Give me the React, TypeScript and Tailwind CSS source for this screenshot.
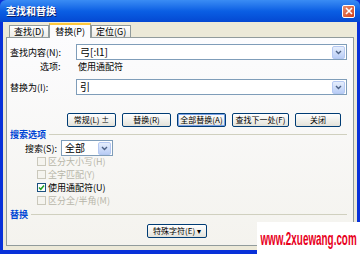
import React from "react";

const F = { fontFamily: '"Noto Sans CJK SC", "Liberation Sans", sans-serif' };

function Arrow() {
  return (
    <div className="w-[13px] h-[13px] mr-[1px] rounded-[2px] bg-gradient-to-b from-[#E6EEFC] to-[#B9CDF6] border border-[#B5C8F2] flex items-center justify-center">
      <svg width="7" height="5" viewBox="0 0 7 5">
        <path d="M1 1 L3.5 3.5 L6 1" stroke="#4D6185" strokeWidth="1.4" fill="none" />
      </svg>
    </div>
  );
}

function Combo({ text, w }: { text: string; w?: string }) {
  return (
    <div className={`h-[16px] bg-white border border-[#7F9DB9] flex items-center justify-between ${w ?? "flex-1"}`}>
      <span className="pl-[3px] text-[10px] leading-none text-black whitespace-nowrap">{text}</span>
      <Arrow />
    </div>
  );
}

function Btn({ children, w, cls }: { children: React.ReactNode; w: string; cls?: string }) {
  return (
    <div
      className={`h-[14px] ${w} rounded-[2px] border border-[#003C74] bg-gradient-to-b from-[#FFFFFF] to-[#E3E2DA] flex items-center justify-center text-[8px] leading-none text-black whitespace-nowrap overflow-hidden ${cls ?? ""}`}
    >
      {children}
    </div>
  );
}

function Check({ label, checked, disabled }: { label: string; checked?: boolean; disabled?: boolean }) {
  return (
    <div className="h-[13px] flex items-center pl-[27px] gap-[2px]">
      <div
        className={`w-[9px] h-[9px] border ${disabled ? "border-[#CAC8BB] bg-[#F5F4EF]" : "border-[#1C5180] bg-white"} flex items-center justify-center`}
      >
        {checked && (
          <svg width="7" height="7" viewBox="0 0 7 7">
            <path d="M1 3.5 L2.8 5.3 L6 1.5" stroke="#21A121" strokeWidth="1.5" fill="none" />
          </svg>
        )}
      </div>
      <span className={`text-[9px] leading-none whitespace-nowrap ${disabled ? "text-[#B8B6A9]" : "text-black"}`}>{label}</span>
    </div>
  );
}

function Section({ title }: { title: string }) {
  return (
    <div className="flex items-center gap-[3px] h-[12px]">
      <span className="text-[9px] leading-none text-[#0046D5] font-bold">{title}</span>
      <div className="flex-1 h-px bg-[#D0D0BF]" />
    </div>
  );
}

export default function App() {
  return (
    <div className="w-[360px] h-[254px] relative overflow-hidden bg-[#0831D9]" style={F}>
      <div className="flex flex-col h-full">
        {/* title bar */}
        <div className="h-[22px] rounded-t-[6px] bg-gradient-to-b from-[#3A8CF4] via-[#0B5FE4] to-[#0548D2] flex items-center justify-between pl-[6px] pr-[5px]">
          <span className="text-white font-bold text-[10px] leading-none [text-shadow:1px_1px_0_#0A1F6B]">查找和替换</span>
          <div className="w-[13px] h-[13px] rounded-[2px] border border-white bg-gradient-to-br from-[#E88B6C] to-[#D03E16] flex items-center justify-center">
            <svg width="8" height="8" viewBox="0 0 8 8">
              <path d="M1 1 L7 7 M7 1 L1 7" stroke="white" strokeWidth="1.6" />
            </svg>
          </div>
        </div>
        {/* body */}
        <div className="flex-1 mx-[3px] mb-[4px] bg-[#ECE9D8] flex flex-col px-[3px] pb-[4px]">
          {/* tabs */}
          <div className="flex items-end h-[15px] pl-[3px]">
            <div className="h-[12px] px-[4px] border border-b-0 border-[#919B9C] bg-gradient-to-b from-white to-[#ECEBE6] text-[9px] leading-none flex items-center text-black">查找(D)</div>
            <div className="h-[15px] px-[5px] border border-b-0 border-[#919B9C] border-t-[2px] border-t-[#FFC83C] bg-[#FCFCFE] text-[9px] leading-none flex items-center text-black relative top-px">替换(P)</div>
            <div className="h-[12px] px-[4px] border border-b-0 border-[#919B9C] bg-gradient-to-b from-white to-[#ECEBE6] text-[9px] leading-none flex items-center text-black">定位(G)</div>
          </div>
          {/* panel */}
          <div className="flex-1 border border-[#919B9C] bg-gradient-to-b from-[#FCFCFE] to-[#F4F3EE] flex flex-col pl-[3px] pr-[6px] pt-[6px]">
            <div className="flex items-center h-[16px]">
              <span className="w-[66px] text-[9px] leading-none text-black">查找内容(N):</span>
              <Combo text="弓[:l1]" />
            </div>
            <div className="flex items-center h-[13px]">
              <span className="w-[66px] pl-[30px] text-[9px] leading-none text-black">选项:</span>
              <span className="pl-[2px] text-[9px] leading-none text-black">使用通配符</span>
            </div>
            <div className="flex items-center h-[16px] mt-[6px]">
              <span className="w-[66px] text-[9px] leading-none text-black">替换为(I):</span>
              <Combo text="引" />
            </div>
            <div className="flex items-center h-[14px] mt-[18px] pl-[57px] gap-[6px]">
              <Btn w="w-[49px]">常规(L) ±</Btn>
              <Btn w="w-[49px]">替换(R)</Btn>
              <Btn w="w-[49px]" cls="ring-1 ring-[#7BA2E7] ring-inset">全部替换(A)</Btn>
              <Btn w="w-[57px]">查找下一处(F)</Btn>
              <Btn w="w-[46px]">关闭</Btn>
            </div>
            <div className="mt-[1px]">
              <Section title="搜索选项" />
            </div>
            <div className="flex items-center h-[14px] mt-[1px] pl-[15px] gap-[4px]">
              <span className="text-[9px] leading-none text-black">搜索(S):</span>
              <Combo text="全部" w="w-[52px]" />
            </div>
            <div>
              <Check label="区分大小写(H)" disabled />
              <Check label="全字匹配(Y)" disabled />
              <Check label="使用通配符(U)" checked />
              <Check label="区分全/半角(M)" disabled />
            </div>
            <div className="mt-[1px]">
              <Section title="替换" />
            </div>
            <div className="flex h-[14px] mt-[4px] pl-[137px]">
              <Btn w="w-[60px]">特殊字符(E) ▾</Btn>
            </div>
          </div>
        </div>
      </div>
      <div className="absolute right-0 bottom-0 w-[103px] h-[32px] bg-white flex items-center justify-center overflow-hidden">
        <span
          className="text-[#E8001C] text-[19px] leading-none font-bold whitespace-nowrap shrink-0 scale-x-[0.52]"
          style={{ fontFamily: '"Liberation Sans", sans-serif' }}
        >
          www.2xuewang.com
        </span>
      </div>
    </div>
  );
}
